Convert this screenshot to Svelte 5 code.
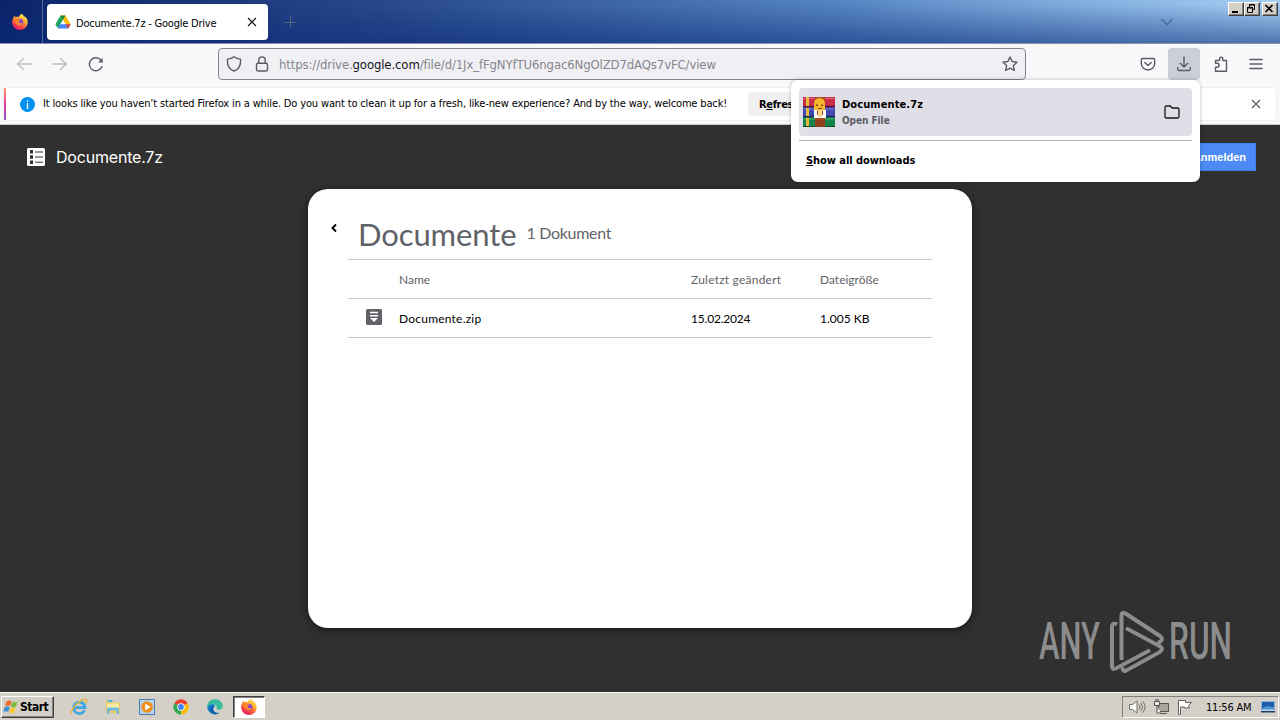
<script>
  let tabTitle = "Documente.7z - Google Drive";
  let fileName = "Documente.7z";
  let files = [{ name: "Documente.zip", modified: "15.02.2024", size: "1.005 KB" }];
  let clock = "11:56 AM";
</script>

{#snippet firefox()}
  <svg class="firefox" viewBox="0 0 18 18">
    <defs>
      <linearGradient id="flame" x1="0.85" y1="0.05" x2="0.3" y2="1">
        <stop offset="0" stop-color="#fff36a" />
        <stop offset="0.35" stop-color="#ffb02e" />
        <stop offset="0.65" stop-color="#ff5938" />
        <stop offset="1" stop-color="#e8146c" />
      </linearGradient>
    </defs>
    <path fill="url(#flame)" d="M11 .8c1.2 1 1.6 2 1.8 2.8 1-.1 1.4.2 1.4.2 1.8 1.7 2.8 3.6 2.5 6.4A7.8 7.8 0 0 1 1.2 10C1 7.800 1.600 5.600 2.700 4.300L3 2.500l1.700 1.700c1-.5 2-.4 2.800 0C8.200 2.700 9.400 1.600 11 .8z" />
    <circle cx="8.8" cy="9.2" r="3.5" fill="#8741d0" />
    <path fill="#ff8a25" d="M3 6.200c1.700-.9 3.200-.8 4.300.2l2.200.2c-.2 1.200-1.600 1.200-1.900 1.900-.1.900 1 2 2.300 1.600 1.200-.3 2 .1 1.800.6-.9 1.700-3.200 2.300-5 1.300C4.500 11 3.900 8.300 3 6.200z" />
  </svg>
{/snippet}

<div class="screen">
  <header class="titlebar">
    <div class="view-btn">{@render firefox()}</div>
    <div class="tab">
      <svg width="16" height="16" viewBox="0 0 16 16">
        <path fill="#fbbc04" d="M5.500 1.500h5L15.700 10.200h-5z" />
        <path fill="#1fa463" d="M5.500 1.500L.4 10.200l2.500 4.300L8 5.800z" />
        <path fill="#4285f4" d="M5.200 10.200h10.500l-2.500 4.300H2.900z" />
        <path fill="#188038" d="M5.500 1.500h5L8 5.800z" />
        <path fill="#ea4335" d="M10.700 10.200h5l-2.500 4.300z" />
      </svg>
      <span class="tab-title">{tabTitle}</span>
      <svg width="10" height="10" viewBox="0 0 10 10"><path d="M1 1l8 8M9 1L1 9" stroke="#15141a" stroke-width="1.2" /></svg>
    </div>
    <svg class="new-tab" width="12" height="12" viewBox="0 0 12 12"><path d="M6.500 0v12M0 6.500h12" stroke="#53657c" /></svg>
    <svg class="list-tabs" width="14" height="8" viewBox="0 0 14 8"><path d="M1.500 1L7 6.500 12.500 1" fill="none" stroke="#4d6d9e" stroke-width="1.600" /></svg>
    <div class="window-btns">
      <span class="win-btn"><svg width="13" height="11" viewBox="0 0 13 11"><path d="M3 8h6v2H3z" /></svg></span>
      <span class="win-btn"><svg width="13" height="11" viewBox="0 0 13 11"><path fill="none" stroke="#000" d="M4.500 4V1.500h5v5H8M2.500 4.500h5v5h-5zM4 2h6M2 5h6" /></svg></span>
      <span class="win-btn close"><svg width="13" height="11" viewBox="0 0 13 11"><path fill="none" stroke="#000" stroke-width="1.700" d="M2.500 2l7 7M9.500 2l-7 7" /></svg></span>
    </div>
  </header>

  <nav class="toolbar">
    <svg class="dim" width="16" height="16" viewBox="0 0 16 16"><path d="M15 8H1.500M7.500 2.500L1.500 8l6 5.500" /></svg>
    <svg class="dim forward" width="16" height="16" viewBox="0 0 16 16"><path d="M1 8h13.500M8.500 2.500l6 5.500-6 5.500" /></svg>
    <svg class="reload" width="16" height="16" viewBox="0 0 16 16"><path d="M14 10.500A6.500 6.500 0 1 1 13 4.200l1.200 1.600" /><path class="solid" d="M14.700 1.800v4.700h-4.700z" /></svg>
    <div class="urlbar">
      <svg width="16" height="16" viewBox="0 0 16 16"><path d="M8 .8c2 1.500 4.200 2.100 6.500 2.300.5 5.200-.8 9.800-6.500 12.100C2.300 12.900 1 8.300 1.500 3.100 3.800 2.900 6 2.300 8 .8z" /></svg>
      <svg class="lock" width="14" height="16" viewBox="0 0 14 16"><rect x="1.500" y="7.200" width="11" height="7.800" rx="1.500" /><path d="M3.800 7V4.300a3.200 3.400 0 0 1 6.400 0V7" /></svg>
      <span class="url">https://drive.<b>google.com</b>/file/d/1Jx_fFgNYfTU6ngac6NgOlZD7dAQs7vFC/view</span>
      <svg width="16" height="16" viewBox="0 0 16 16"><path d="M8 1l2.100 4.500 4.900.7-3.600 3.400.9 4.900L8 12.200l-4.300 2.300.9-4.900L1 6.200l4.900-.7z" /></svg>
    </div>
    <div class="tools">
      <svg width="16" height="16" viewBox="0 0 16 16"><path d="M2.500 2.500h11a1.200 1.200 0 0 1 1.200 1.200V7.500a6.700 6.500 0 0 1-13.400 0V3.700a1.200 1.200 0 0 1 1.200-1.200zM4.800 6.500L8 9.500l3.200-3" /></svg>
      <span class="tool-active"><svg width="16" height="16" viewBox="0 0 16 16"><path d="M8 1v10M4.200 7.300L8 11l3.800-3.700M1.700 11.500v1.800q0 1.200 1.200 1.200h10.200q1.200 0 1.200-1.200v-1.800" /></svg></span>
      <svg width="16" height="16" viewBox="0 0 16 16"><path d="M2.500 7.200V4.500h4V3a1.700 1.700 0 0 1 3.400 0v1.500h3.600v10.700h-11v-4H4a1.800 1.800 0 0 0 0-4z" /></svg>
      <svg class="menu" width="14" height="14" viewBox="0 0 14 14"><path d="M1 2.500h12M1 7h12M1 11.500h12" /></svg>
    </div>
  </nav>

  <div class="notice-area">
    <div class="notice">
      <svg width="15" height="15" viewBox="0 0 15 15"><circle cx="7.500" cy="7.500" r="7.500" fill="#0090ed" /><path d="M7.500 6v6M7.500 3.200v1.500" stroke="#fff" stroke-width="1.300" /></svg>
      <span class="notice-text">It looks like you haven’t started Firefox in a while. Do you want to clean it up for a fresh, like-new experience? And by the way, welcome back!</span>
      <button class="refresh">R<u>e</u>fresh Firefox…</button>
      <svg class="dismiss" width="10" height="10" viewBox="0 0 10 10"><path d="M1 1l8 8M9 1L1 9" stroke="#5b5b66" stroke-width="1.100" /></svg>
    </div>
  </div>

  <main class="viewer">
    <div class="viewer-head">
      <svg width="18" height="18" viewBox="0 0 18 18">
        <rect width="18" height="18" rx="1.500" fill="#fff" />
        <path d="M3 2h3v3.500H3zM3 7.200h3v3.500H3zM3 12.500h3V16H3z" fill="#303030" />
        <path d="M8 4h8M8 9h8M8 14.200h8" stroke="#777" stroke-width="1.500" />
      </svg>
      <span class="doc-name">{fileName}</span>
      <button class="sign-in">Anmelden</button>
    </div>

    <section class="archive">
      <div class="archive-head">
        <svg width="8" height="10" viewBox="0 0 8 10"><path d="M6 1.500L2.500 5 6 8.500" fill="none" stroke="#000" stroke-width="1.900" /></svg>
        <h1>Documente</h1>
        <span class="count">1 Dokument</span>
      </div>
      <div class="table">
        <div class="row labels">
          <span></span><span>Name</span><span class="modified">Zuletzt geändert</span><span>Dateigröße</span>
        </div>
        {#each files as file}
          <div class="row">
            <svg width="16" height="16" viewBox="0 0 16 16">
              <rect width="16" height="16" rx="1.500" fill="#5f6368" />
              <path d="M4 3.500h8M4 6.700h8" stroke="#fff" stroke-width="1.500" />
              <path d="M4 9h8l-4 4z" fill="#fff" />
            </svg>
            <span class="name">{file.name}</span><span class="date">{file.modified}</span><span>{file.size}</span>
          </div>
        {/each}
      </div>
    </section>

    <svg class="watermark" width="210" height="64" viewBox="0 0 210 64">
      <text x="1" y="50" textLength="61" lengthAdjust="spacingAndGlyphs">ANY</text>
      <text x="131" y="50" textLength="63" lengthAdjust="spacingAndGlyphs">RUN</text>
      <g fill="none" stroke="#8c8c8c" stroke-width="4" stroke-linejoin="round">
        <path d="M79 13.500q-5-3-5 3V58q0 4 4 2l34-19.500" transform="translate(0 3) scale(1 .94)" />
        <path d="M83.500 51V6.500q0-4 4-2L122 27q4 3 0 6q-1 1-3 0" />
        <path d="M88 19.500L122 39q4 3 0 6L87.500 65.500q-3 1-3-4" transform="translate(0 1) scale(1 .93)" />
      </g>
    </svg>
  </main>

  <footer class="taskbar">
    <button class="start">
      <svg width="17" height="16" viewBox="0 0 17 16">
        <path fill="#ef6a2c" d="M3.500 2.500c2-1.400 3.400-1.200 5-.3L7 7.200c-1.600-1-3.200-1-5 .2z" />
        <path fill="#83b93a" d="M9.300 2.700c1.900 1 3.300.8 5.200-.3L13 7.500c-1.900 1.200-3.400 1.200-5.200.2z" />
        <path fill="#3a8edb" d="M1.700 8.300c2-1.200 3.500-1.100 5-.2l-1.500 5c-1.600-1-3.200-1-5 .2z" />
        <path fill="#f8c72d" d="M7.500 8.600c1.900 1 3.300.9 5.200-.3l-1.500 5.200c-1.800 1-3.400 1-5.200 0z" />
      </svg>
      Start
    </button>
    <div class="launch">
      <svg width="18" height="18" viewBox="0 0 18 18">
        <path d="M14.500 12.200A5.700 5.700 0 1 1 15 9.600H5" fill="none" stroke="#3da5e0" stroke-width="2.700" />
        <path d="M1.500 16C-.5 13 8 3 14 1.500c3.500-.8 3 2 1.500 4" fill="none" stroke="#e5b93f" stroke-width="1.400" />
      </svg>
      <svg width="18" height="18" viewBox="0 0 18 18">
        <path fill="#e9ca63" d="M2 3h5l1 1.500h8V15H2z" /><path fill="#f8e9a4" d="M3 5.500h12v5H3z" />
        <path fill="#4cb4d9" d="M3.500 2h5v2h-5z" /><path fill="#70b9df" d="M3 16v-5q0-1.500 1.500-1.500h9Q15 9.500 15 11v5h-2.500v-3.500h-7V16z" />
      </svg>
      <svg width="18" height="18" viewBox="0 0 18 18">
        <path fill="#b6d5ec" stroke="#477eac" d="M1.500 1.500h15v15h-15z" /><circle cx="9" cy="9" r="5.800" fill="#f28c1b" /><path fill="#fff" d="M7.200 5.500v7l5.300-3.500z" />
      </svg>
      <svg width="18" height="18" viewBox="0 0 18 18">
        <path fill="#ea4335" d="M9 9L2.400 5.200a7.600 7.600 0 0 1 13.200 0z" />
        <path fill="#fbbc05" d="M9 9l6.600-3.800A7.600 7.600 0 0 1 9 16.600z" />
        <path fill="#34a853" d="M9 9v7.600A7.600 7.600 0 0 1 2.400 5.200z" />
        <path fill="#ea4335" d="M2.400 5.200h13.200L9 7z" /><circle cx="9" cy="9" r="3.800" fill="#fff" /><circle cx="9" cy="9" r="2.900" fill="#4285f4" />
      </svg>
      <svg width="18" height="18" viewBox="0 0 18 18">
        <path fill="#1684cb" d="M1.200 9A7.800 7.800 0 0 0 14 14.500c-4 1-7-1-6.500-4 .3-2 2-2.400 2-2.400C7 4 2 5.500 1.200 9z" />
        <path fill="#37bd9d" d="M1.200 9C1.200 4 4.900 1.200 9 1.200c5.200 0 7.800 3.500 7.800 6.800 0 2.800-2.300 3.900-4.300 3.700-2-.1-2.200-.8-1.900-1.200.7-1.500-.2-4.600-4-4.600C4 5.900 2 7.300 1.200 9z" />
        <path fill="#0c5ca8" d="M7.500 8c-2 3 .2 7.700 5 7.300C8.500 18 2.500 14 4.500 10 5.200 8.700 6.500 8 7.500 8z" />
      </svg>
    </div>
    <div class="task">{@render firefox()}</div>
    <div class="tray">
      <svg width="18" height="16" viewBox="0 0 18 16"><path fill="#f6f6f6" stroke="#75736e" d="M1.500 5.500h3L9 2v12l-4.500-3.500h-3z" /><path fill="none" stroke="#74716b" d="M11 5.500q2 2.500 0 5M13 4q3 4 0 8M15 2.500q4 5.500 0 11" /></svg>
      <svg width="17" height="16" viewBox="0 0 17 16"><path fill="#aaa69e" stroke="#55534f" d="M5.500 4.500h10v8h-10zM7 14.500h7" /><path fill="#eee" stroke="#55534f" d="M1.500 2.500h5v4h-5zM3 0v2M5 0v2M4 7v7h4" /></svg>
      <svg width="16" height="16" viewBox="0 0 16 16"><path fill="#fff" stroke="#65635f" d="M1.500 15.500v-14h7v2h6l-3 3 1 2.500h-5V8h-4v7.500z" /></svg>
      <span class="clock">{clock}</span>
      <svg width="16" height="14" viewBox="0 0 16 14"><path fill="#1f5caa" stroke="#85b6df" d="M1.500 1.500h13v8h-13z" /><path fill="#4a91da" d="M2 8l5-2 7 1v2H2z" /><path fill="#163e72" d="M1 11h14v1.500H1z" /></svg>
    </div>
  </footer>

  <aside class="downloads">
    <div class="download">
      <svg width="32" height="32" viewBox="0 0 32 32">
        <path fill="#c92d48" d="M0 1h32v10H0z" /><path fill="#4349b0" d="M0 11h32v10H0z" /><path fill="#15834b" d="M0 21h32v10H0z" />
        <path stroke="#e26178" stroke-width="1.200" d="M1 2.500h30" /><path stroke="#757de0" stroke-width="1.200" d="M1 13h30" /><path stroke="#45a969" stroke-width="1.200" d="M1 23h30" />
        <path stroke="#65142c" stroke-width="1.500" d="M0 10.500h32" /><path stroke="#202566" stroke-width="1.500" d="M0 20.500h32" /><path stroke="#0b4a2b" d="M0 30.500h32" />
        <path fill="#e5be3d" d="M3 1h3v9H3zM3 12h3v8H3zM3 22h3v8H3z" />
        <path fill="#ab4a1e" d="M12 1h10v30H12z" /><path fill="#f4b52f" d="M11 8q0-6 5.500-6T22 8v7H11z" /><path fill="#8d3e1b" d="M13 8.500h2V10h-2zM18 8.500h2V10h-2zM15 12h4v1h-4zM12 24h10v7H12z" />
        <path fill="#fff" d="M11 14h3v5h6v-5h3v8H11z" /><path fill="#f5d989" d="M15 14h4v7h-4z" />
      </svg>
      <div class="download-info">
        <span class="download-name">{fileName}</span>
        <span class="download-action">Open File</span>
      </div>
      <svg width="16" height="14" viewBox="0 0 16 14"><path d="M2.300 1h4l1.900 2h5.300q1.500 0 1.500 1.500v7q0 1.500-1.500 1.500h-11Q1 13 1 11.500v-9Q1 1 2.300 1z" fill="none" stroke="#15141a" stroke-width="1.300" /></svg>
    </div>
    <div class="show-all"><u>S</u>how all downloads</div>
  </aside>
</div>

<style>
  :global(body) {
    margin: 0;
    overflow: hidden;
  }

  * {
    box-sizing: border-box;
  }

  svg {
    display: block;
    flex: none;
  }

  button {
    border: 0;
    padding: 0;
    font: inherit;
    white-space: nowrap;
  }

  .screen {
    position: relative;
    display: flex;
    flex-direction: column;
    width: 1280px;
    height: 720px;
    overflow: hidden;
    color: #000;
    font-family: "DejaVu Sans Condensed", "DejaVu Sans", sans-serif;
    font-stretch: condensed;
    font-size: 11px;
    white-space: nowrap;
  }

  .titlebar {
    display: flex;
    align-items: flex-start;
    height: 44px;
    background:
      linear-gradient(to bottom, transparent 10%, rgba(10, 42, 120, 0.55)),
      linear-gradient(to right, #0a246a, #28488b 30%, #5483c1 65%, #a6cff4);
    border-bottom: 1px solid #8993ad;
  }

  .view-btn {
    width: 43px;
    height: 43px;
    padding: 13px 0 0 11px;
    border-right: 1px solid #5266a0;
  }

  .firefox {
    width: 18px;
    height: 18px;
  }

  .tab {
    display: flex;
    align-items: center;
    width: 221px;
    height: 36px;
    margin: 4px 0 0 4px;
    padding: 0 11px 0 8px;
    background: #fff;
    border-radius: 4px;
  }

  .tab-title {
    flex: 1;
    margin: 2px 0 0 5px;
    letter-spacing: -0.22px;
  }

  .new-tab {
    margin: 16px 0 0 16px;
  }

  .list-tabs {
    margin: 18px 0 0 auto;
  }

  .window-btns {
    display: flex;
    margin: 2px 2px 0 54px;
  }

  .win-btn {
    width: 16px;
    height: 14px;
    background: #d4d0c8;
    border: 1px solid;
    border-color: #fff #404040 #404040 #fff;
    box-shadow: inset -1px -1px #808080;
  }

  .win-btn.close {
    margin-left: 2px;
  }

  .toolbar {
    display: flex;
    align-items: center;
    height: 40px;
    padding: 0 17px 0 16px;
    background: #f9f9fb;
  }

  .toolbar svg {
    fill: none;
    stroke: #5b5b66;
    stroke-width: 1.4;
    stroke-linejoin: round;
    stroke-linecap: round;
  }

  .toolbar .dim {
    stroke: #bdbdc2;
  }

  .toolbar .solid {
    fill: #5b5b66;
    stroke: none;
  }

  .forward,
  .reload {
    margin-left: 20px;
  }

  .urlbar {
    display: flex;
    align-items: center;
    width: 808px;
    height: 32px;
    margin-left: 114px;
    padding: 0 7px;
    background: #f0f0f4;
    border: 1px solid #85858e;
    border-radius: 4px;
  }

  .lock {
    margin-left: 13px;
  }

  .url {
    flex: 1;
    margin-left: 10px;
    color: #85858c;
    font-size: 13px;
    letter-spacing: -0.12px;
  }

  .url b {
    color: #15141a;
    font-weight: 400;
  }

  .tools {
    display: flex;
    align-items: center;
    margin-left: auto;
  }

  .tool-active {
    display: grid;
    place-items: center;
    width: 32px;
    height: 32px;
    margin: 0 13px 0 12px;
    background: #cccfd8;
    border-radius: 4px;
  }

  .tools .menu {
    margin-left: 20px;
  }

  .notice-area {
    height: 41px;
    padding: 4px 4px 5px;
    background: #f9f9fb;
    border-bottom: 1px solid #ccc;
  }

  .notice {
    position: relative;
    display: flex;
    align-items: center;
    height: 32px;
    padding: 0 15px 0 16px;
    overflow: hidden;
    background: #fff;
    border-radius: 0 4px 4px 0;
    box-shadow: 0 0 2px #ddd;
  }

  .notice::before {
    content: "";
    position: absolute;
    inset: 0 auto 0 0;
    width: 2px;
    background: linear-gradient(#ff9a68, #e53898 50%, #9059d0);
  }

  .notice-text {
    width: 684px;
    margin-left: 8px;
    padding-bottom: 2px;
    letter-spacing: -0.148px;
  }

  .refresh {
    height: 24px;
    margin-left: 21px;
    padding: 0 11px;
    background: #f0f0f2;
    border-radius: 4px;
    font-weight: 700;
    letter-spacing: -0.35px;
  }

  .dismiss {
    margin-left: auto;
  }

  .viewer {
    position: relative;
    height: 567px;
    background: #303030;
    font-family: Lato, "Open Sans", sans-serif;
    font-stretch: normal;
  }

  .viewer-head {
    display: flex;
    align-items: center;
    height: 64px;
    padding: 0 24px 0 27px;
    color: #fff;
  }

  .doc-name {
    margin-left: 11px;
    font-family: Inter, sans-serif;
    font-size: 16px;
    letter-spacing: -0.2px;
  }

  .sign-in {
    width: 80px;
    height: 28px;
    margin-left: auto;
    padding-left: 7px;
    background: #4c8bf5;
    border: 1px solid #3c80f0;
    color: #fff;
    font: 700 11px "Liberation Sans", sans-serif;
  }

  .archive {
    width: 664px;
    height: 439px;
    margin: 0 auto;
    background: #fff;
    border-radius: 20px;
    box-shadow: 0 2px 8px rgba(0, 0, 0, 0.55);
  }

  .archive-head {
    display: flex;
    align-items: center;
    height: 70px;
    padding: 19px 0 0 22px;
    color: #5f6368;
  }

  .archive-head svg {
    margin-top: -11px;
  }

  h1 {
    margin: 0 0 0 20px;
    font-size: 31px;
    font-weight: 400;
    letter-spacing: -0.1px;
  }

  .count {
    margin-left: 10px;
    padding-bottom: 2px;
    font-size: 16px;
    letter-spacing: -0.3px;
  }

  .table {
    margin: 0 40px;
    border-top: 1px solid #c6c6c6;
    font-size: 12px;
  }

  .row {
    display: grid;
    grid-template-columns: 33px 292px 129px auto;
    align-items: center;
    height: 39px;
    padding: 0 0 0 18px;
    border-bottom: 1px solid #c6c6c6;
  }

  .row svg {
    margin-top: -3px;
  }

  .labels {
    color: #5f6368;
  }

  .modified,
  .name {
    letter-spacing: 0.22px;
  }

  .date {
    letter-spacing: -0.2px;
  }

  .watermark {
    position: absolute;
    top: 484px;
    left: 1038px;
  }

  .watermark text {
    fill: #8c8c8c;
    font-family: Roboto, sans-serif;
    font-size: 52px;
    font-weight: 500;
  }

  .taskbar {
    display: flex;
    align-items: center;
    height: 28px;
    padding-top: 1px;
    background: #d4d0c8;
    border-top: 1px solid #fff;
  }

  .start {
    display: flex;
    align-items: center;
    width: 53px;
    height: 22px;
    margin-left: 1px;
    padding-left: 1px;
    background: #d4d0c8;
    border: 1px solid;
    border-color: #fff #404040 #404040 #fff;
    box-shadow: inset -1px -1px #808080;
    font-weight: 700;
    font-size: 12px;
    letter-spacing: -0.5px;
  }

  .launch {
    display: flex;
    gap: 16px;
    margin-left: 16px;
  }

  .task {
    display: grid;
    place-items: center;
    width: 32px;
    height: 22px;
    margin-left: 9px;
    background: #fff;
    border: 1px solid;
    border-color: #404040 #fff #fff #404040;
    box-shadow: inset 1px 1px #808080;
  }

  .tray {
    display: flex;
    align-items: center;
    gap: 7px;
    width: 157px;
    height: 22px;
    margin: 0 1px 0 auto;
    padding-left: 5px;
    border: 1px solid;
    border-color: #808080 #fff #fff #808080;
  }

  .clock {
    width: 47px;
    margin-left: 6px;
    letter-spacing: -0.2px;
  }

  .downloads {
    position: absolute;
    top: 80px;
    left: 791px;
    width: 409px;
    height: 102px;
    padding: 8px;
    background: #fff;
    border-radius: 7px;
    box-shadow: 0 0 4px rgba(0, 0, 0, 0.25);
    font-weight: 700;
  }

  .download {
    display: flex;
    align-items: center;
    height: 48px;
    padding: 0 12px 0 4px;
    background: #e0dfe7;
    border-radius: 4px;
  }

  .download-info {
    display: flex;
    flex: 1;
    flex-direction: column;
    gap: 4px;
    margin: -1px 0 0 7px;
    letter-spacing: 0.1px;
  }

  .download-action {
    color: #5b5b66;
    font-size: 10px;
    letter-spacing: -0.05px;
  }

  .show-all {
    margin-top: 4px;
    padding: 13px 7px;
    border-top: 1px solid #b0b0b4;
    letter-spacing: -0.06px;
  }
</style>
